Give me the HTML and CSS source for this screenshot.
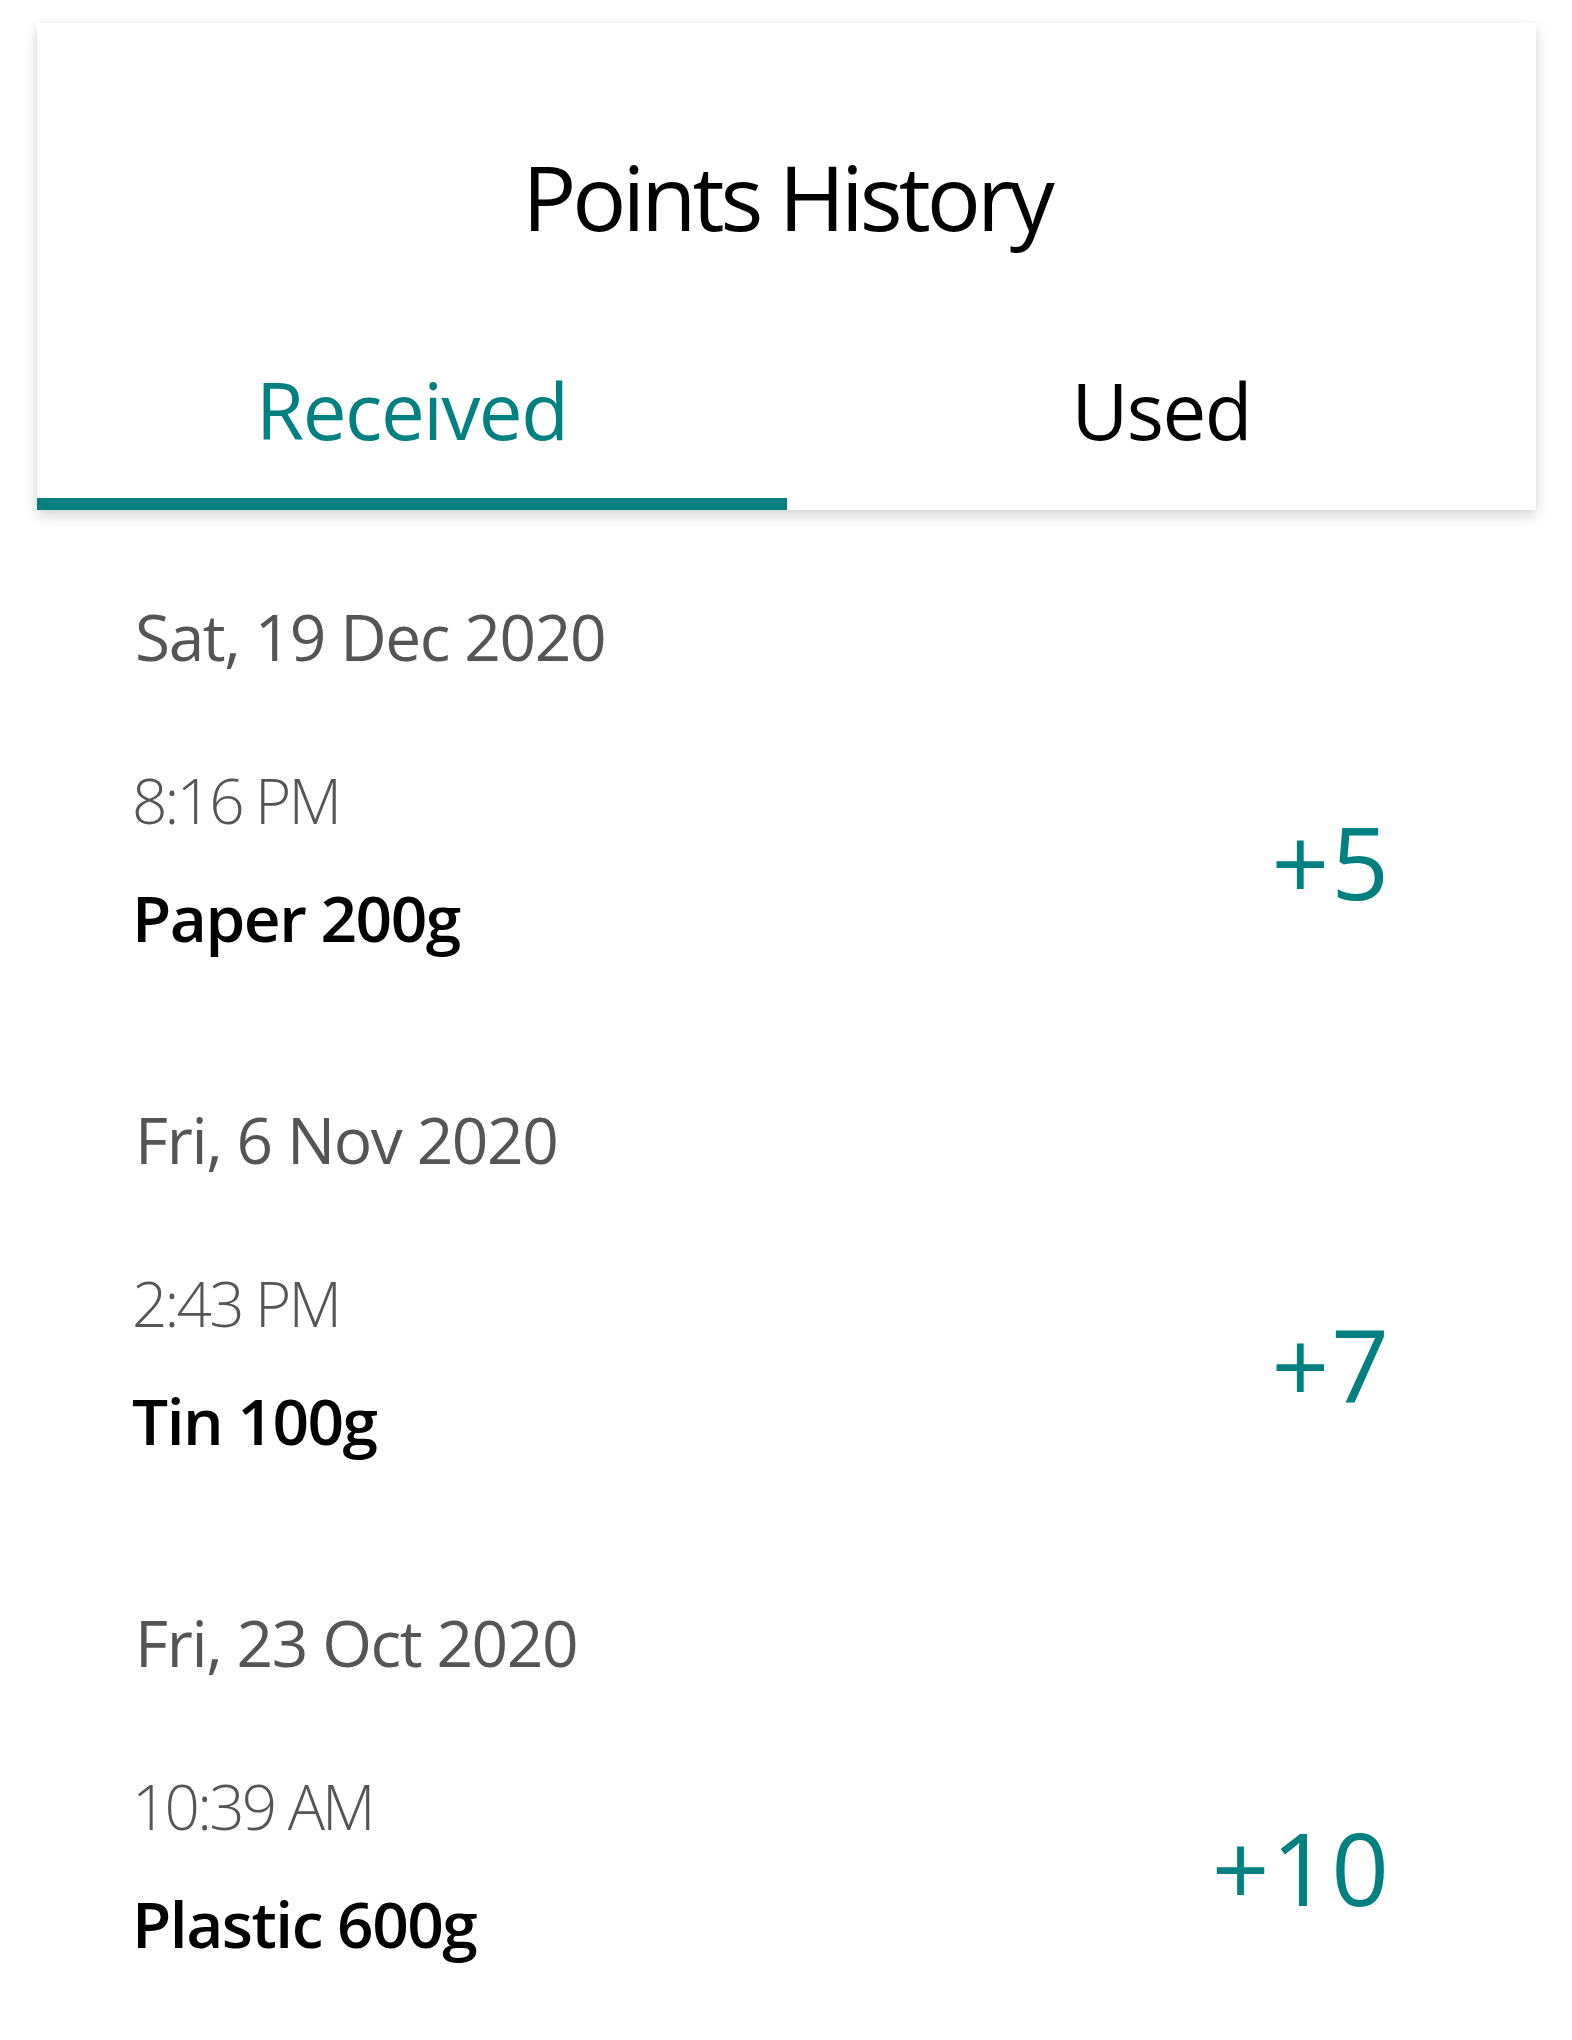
FILE: index.html
```html
<!DOCTYPE html>
<html lang="en">
<head>
<meta charset="utf-8">
<title>Points History</title>
<link rel="stylesheet" href="styles.css">
</head>
<body>
<div class="page">
  <header class="card">
    <h1 class="title">Points History</h1>
    <nav class="tabs">
      <div class="tab tab-active">Received</div>
      <div class="tab">Used</div>
    </nav>
  </header>
  <main class="list">
    <section class="group">
      <div class="date">Sat, 19 Dec 2020</div>
      <div class="entry">
        <div class="info">
          <div class="time">8:16 PM</div>
          <div class="name">Paper 200g</div>
        </div>
        <div class="amount">+5</div>
      </div>
    </section>
    <section class="group">
      <div class="date">Fri, 6 Nov 2020</div>
      <div class="entry">
        <div class="info">
          <div class="time">2:43 PM</div>
          <div class="name">Tin 100g</div>
        </div>
        <div class="amount">+7</div>
      </div>
    </section>
    <section class="group">
      <div class="date">Fri, 23 Oct 2020</div>
      <div class="entry">
        <div class="info">
          <div class="time">10:39 AM</div>
          <div class="name">Plastic 600g</div>
        </div>
        <div class="amount">+10</div>
      </div>
    </section>
  </main>
</div>
</body>
</html>
```
FILE: styles.css
```css
html, body {
  margin: 0;
  padding: 0;
  background: #ffffff;
}

body {
  font-family: "Open Sans", "Noto Sans", "Liberation Sans", sans-serif;
  color: #000;
}

.page {
  width: 1572px;
  padding-top: 23px;
}

.card {
  margin-left: 37px;
  width: 1499px;
  background: #fff;
  padding-top: 111px;
  box-shadow: 0 6px 14px rgba(0, 0, 0, 0.16), 0 0 6px rgba(0, 0, 0, 0.04);
}

.title {
  margin: 0;
  font-size: 90px;
  line-height: 124px;
  font-weight: 400;
  text-align: center;
  letter-spacing: -4px;
  color: #000;
}

.tabs {
  margin-top: 99px;
  display: grid;
  grid-template-columns: 1fr 1fr;
}

.tab {
  font-size: 78px;
  line-height: 106px;
  text-align: center;
  padding-bottom: 35px;
  border-bottom: 12px solid transparent;
  letter-spacing: -1.5px;
  color: #000;
}

.tab-active {
  color: #008080;
  border-bottom-color: #008080;
}

.list {
  padding: 83px 181px 0 132px;
  display: flex;
  flex-direction: column;
  gap: 135px;
}

.date {
  font-size: 64px;
  line-height: 87px;
  color: #555555;
  padding-left: 3px;
  letter-spacing: -1.4px;
}

.entry {
  margin-top: 77px;
  display: flex;
  align-items: center;
  justify-content: space-between;
}

.time {
  font-size: 62px;
  line-height: 86px;
  font-weight: 300;
  color: #555555;
  letter-spacing: -2.8px;
}

.name {
  margin-top: 31px;
  font-size: 64px;
  line-height: 87px;
  font-weight: 600;
  color: #000;
  letter-spacing: -1.5px;
}

.amount {
  font-size: 101px;
  line-height: 138px;
  color: #008080;
  padding-top: 4px;
  letter-spacing: 2px;
}
```
